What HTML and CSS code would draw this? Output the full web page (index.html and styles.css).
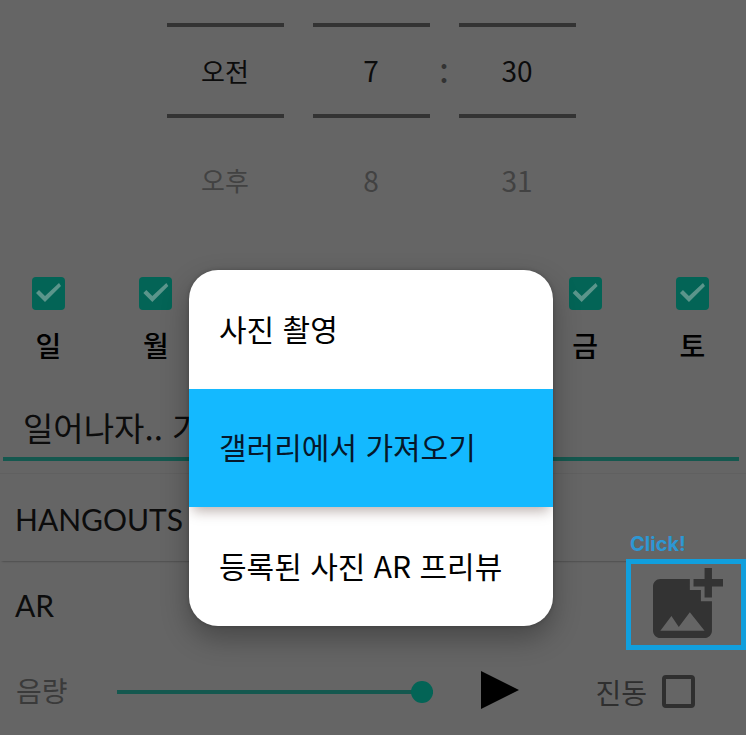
FILE: index.html
```html
<!DOCTYPE html>
<html lang="ko">
<head>
<meta charset="utf-8">
<meta name="viewport" content="width=device-width, initial-scale=1">
<title>알람</title>
<link rel="stylesheet" href="styles.css">
</head>
<body>
<main class="screen">
  <section class="picker">
    <div class="wheel"><div class="current">오전</div><div class="next">오후</div></div>
    <span class="gap"></span>
    <div class="wheel"><div class="current number">7</div><div class="next number">8</div></div>
    <span class="gap colon">:</span>
    <div class="wheel"><div class="current number">30</div><div class="next number">31</div></div>
  </section>

  <section class="days">
    <label class="day"><input class="check" type="checkbox" checked>일</label>
    <label class="day"><input class="check" type="checkbox" checked>월</label>
    <label class="day friday"><input class="check" type="checkbox" checked>금</label>
    <label class="day"><input class="check" type="checkbox" checked>토</label>
  </section>

  <input class="memo" type="text" aria-label="메모" value="일어나자.. 가">

  <button class="row ringtone" type="button">HANGOUTS</button>

  <section class="row ar">
    <span>AR</span>
    <div class="photo-wrap">
      <span class="hint">Click!</span>
      <button class="photo" type="button" aria-label="사진 추가">
        <svg class="photo-icon" viewBox="3 2 19 19" aria-hidden="true"><path d="M19 7v3h-2V7h-3V5h3V2h2v3h3v2zM16 11V8h-3V5H5c-1.1 0-2 .9-2 2v12c0 1.1.9 2 2 2h12c1.1 0 2-.9 2-2v-8zM5 19l3-4 2 3 3-4 4 5z"/></svg>
      </button>
    </div>
  </section>

  <section class="sound">
    <label class="volume-label" for="volume">음량</label>
    <input class="volume" id="volume" type="range" min="0" max="100" value="100">
    <button class="play" type="button" aria-label="재생">
      <svg class="play-icon" viewBox="0 0 38 38" aria-hidden="true"><path d="M0 0L38 19L0 38z"/></svg>
    </button>
    <label class="vibrate">진동<input class="box" type="checkbox"></label>
  </section>

  <div class="dialog" role="dialog" aria-label="사진">
    <button class="option" type="button">사진 촬영</button>
    <button class="option selected" type="button">갤러리에서 가져오기</button>
    <button class="option" type="button">등록된 사진 AR 프리뷰</button>
  </div>
</main>
</body>
</html>
```
FILE: styles.css
```css
* {
  box-sizing: border-box;
}

body {
  margin: 0;
  background: #fff;
}

button,
input {
  margin: 0;
  padding: 0;
  border: 0;
  border-radius: 0;
  background: none;
  color: inherit;
  font: inherit;
}

.screen {
  position: relative;
  margin-right: 2px;
  background: #656565;
  color: #0c0c0c;
  font-family: "Noto Sans CJK KR", sans-serif;
  font-size: 28px;
  line-height: 40px;
}

.picker {
  display: flex;
  justify-content: center;
  height: 277px;
  padding: 23px 4px 0 0;
  font-size: 26px;
  text-align: center;
}

.wheel {
  width: 117px;
}

.current {
  height: 95px;
  border: solid #333;
  border-width: 4px 0;
  line-height: 87px;
}

.next {
  padding-top: 42px;
  color: #424242;
}

.number {
  font-size: 28px;
}

.gap {
  width: 29px;
}

.colon {
  color: #333;
  font-weight: 700;
  line-height: 100px;
}

.days {
  display: grid;
  grid-template-columns: repeat(7, 33px);
  justify-content: space-between;
  padding: 0 37px 0 32px;
  color: #000;
  font-weight: 500;
}

.day {
  display: flex;
  flex-direction: column;
  align-items: center;
  gap: 15px;
}

.friday {
  grid-column: 6;
}

.check {
  display: block;
  flex: none;
  width: 33px;
  height: 33px;
  border-radius: 4px;
  background: #036456;
  appearance: none;
}

.check:checked::before {
  content: "";
  display: block;
  width: 33px;
  height: 33px;
  background: #5b958b;
  clip-path: polygon(4px 16px, 7px 13px, 13px 19px, 27px 6px, 29px 9px, 13px 25px);
}

.memo {
  display: block;
  width: calc(100% - 10px);
  height: 60px;
  margin: 36px 7px 0 3px;
  padding: 0 20px 4px;
  border-bottom: 4px solid #15584f;
  font-size: 33px;
}

.row {
  display: flex;
  align-items: center;
  width: 100%;
  padding-left: 15px;
  font-family: Lato, sans-serif;
  font-size: 30px;
}

.ringtone {
  height: 88px;
  margin-top: 12px;
  padding-top: 2px;
  border-top: 1px solid #606060;
  box-shadow: 0 2px 2px -2px #333;
}

.ar {
  justify-content: space-between;
  height: 87px;
}

.photo-wrap {
  position: relative;
}

.photo {
  display: flex;
  align-items: flex-start;
  width: 120px;
  height: 91px;
  padding: 4px 0 0 22px;
  border: 5px solid #119fdd;
}

.photo-icon {
  display: block;
  width: 70px;
  height: 70px;
  fill: #333;
}

.hint {
  position: absolute;
  bottom: 100%;
  left: 4px;
  color: #2d97d3;
  font-family: Inter, sans-serif;
  font-size: 20px;
  font-weight: 700;
  line-height: 30px;
}

.sound {
  display: flex;
  align-items: center;
  height: 87px;
  padding: 0 51px 0 16px;
  color: #3a3a3a;
}

.volume-label {
  width: 101px;
  padding-bottom: 4px;
}

.volume {
  flex: 1;
  min-width: 0;
  height: 22px;
  background: linear-gradient(#15584f, #15584f) center / 100% 4px no-repeat;
  appearance: none;
}

.volume::-webkit-slider-thumb {
  width: 22px;
  height: 22px;
  border-radius: 50%;
  background: #036456;
  appearance: none;
}

.play {
  margin: 0 76px 4px 48px;
}

.play-icon {
  display: block;
  width: 38px;
  height: 38px;
  fill: #000;
}

.vibrate {
  display: flex;
  align-items: center;
  gap: 15px;
  color: #2f2f2f;
}

.box {
  width: 33px;
  height: 33px;
  border: 4px solid #2f2f2f;
  border-radius: 4px;
  appearance: none;
}

.dialog {
  position: absolute;
  top: 270px;
  left: calc(50% - 184px);
  width: 364px;
  overflow: hidden;
  border-radius: 29px;
  background: #fff;
  box-shadow: 0 12px 28px rgba(0, 0, 0, 0.3), 0 0 4px rgba(0, 0, 0, 0.2);
}

.option {
  display: block;
  width: 100%;
  height: 119px;
  padding: 0 30px 4px;
  color: #000;
  font-size: 30px;
  text-align: left;
  white-space: nowrap;
}

.selected {
  position: relative;
  height: 118px;
  background: #14b9ff;
  color: #06182b;
  box-shadow: 0 8px 12px -4px rgba(60, 30, 20, 0.35);
}
```
